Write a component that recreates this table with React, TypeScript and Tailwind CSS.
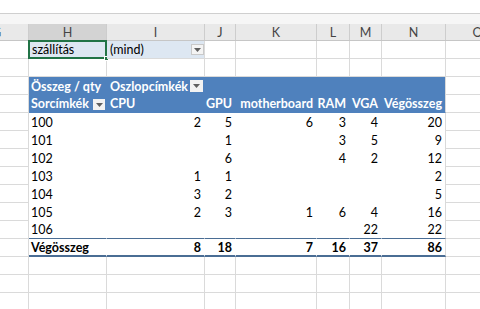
import React from 'react';

type Col = { key: string; w: string };

const cols: Col[] = [
  { key: 'G', w: 'w-[64px]' },
  { key: 'H', w: 'w-[78px]' },
  { key: 'I', w: 'w-[98px]' },
  { key: 'J', w: 'w-[31px]' },
  { key: 'K', w: 'w-[81px]' },
  { key: 'L', w: 'w-[33px]' },
  { key: 'M', w: 'w-[32px]' },
  { key: 'N', w: 'w-[64px]' },
  { key: 'O', w: 'w-[64px]' },
];

// row label, then CPU, GPU, motherboard, RAM, VGA, total
const data: (string | number)[][] = [
  ['100', 2, 5, 6, 3, 4, 20],
  ['101', '', 1, '', 3, 5, 9],
  ['102', '', 6, '', 4, 2, 12],
  ['103', 1, 1, '', '', '', 2],
  ['104', 3, 2, '', '', '', 5],
  ['105', 2, 3, 1, 6, 4, 16],
  ['106', '', '', '', '', 22, 22],
];
const totals = [8, 18, 7, 16, 37, 86];

const grid = 'border-r border-b border-[#dadada]';

function Arrow({ className }: { className: string }) {
  return (
    <span className={`flex items-center justify-center ${className}`}>
      <svg width="7" height="4" viewBox="0 0 7 4">
        <path d="M0 0h7L3.5 4z" fill="#5f5f5f" />
      </svg>
    </span>
  );
}

function Blank({ w }: { w: string }) {
  return <div className={`${w} h-[18px] shrink-0 bg-white ${grid}`} />;
}

function PivotCell({
  w,
  children,
  right,
  last,
  cls = '',
}: {
  w: string;
  children?: React.ReactNode;
  right?: boolean;
  last?: boolean;
  cls?: string;
}) {
  return (
    <div
      className={`${w} h-[18px] shrink-0 flex items-center pt-[2px] px-[2px] border-r ${
        last ? 'border-r-[#dadada]' : 'border-r-transparent'
      } ${right ? 'justify-end pr-[3px]' : ''} ${cls}`}
    >
      {children}
    </div>
  );
}

export default function App() {
  const w = cols.map((c) => c.w);

  return (
    <div className="w-[480px] h-[309px] overflow-hidden bg-white font-['Lato',sans-serif] text-[12.5px] text-black">
      <div className="h-[14px] bg-white border-b border-[#cfcfcf]" />
      <div className="h-[10px] bg-[#f6f6f6]" />

      <div className="ml-[-35px] flex flex-col">
        {/* column letters */}
        <div className="flex h-[17px] bg-[#e9e9e9] border-b border-[#c6c6c6]">
          {cols.map((c) => (
            <div
              key={c.key}
              className={`${c.w} shrink-0 flex items-center justify-center pt-[2px] border-r border-[#cdcdcd] text-[12.5px] text-[#444] ${
                c.key === 'H' ? 'bg-[#d3d3d3]' : ''
              }`}
            >
              {c.key}
            </div>
          ))}
        </div>

        {/* report filter */}
        <div className="flex">
          <Blank w={w[0]} />
          <div className="relative w-[78px] h-[18px] shrink-0 bg-[#dde7f2] border-r border-b border-[#dadada]">
            <div className="absolute inset-[-1px] border-2 border-[#217346] flex items-center pt-[2px] pl-[2px]">
              szállítás
            </div>
            <span className="absolute right-[-3px] bottom-[-3px] w-[5px] h-[5px] bg-[#217346] border border-white" />
          </div>
          <div className="w-[98px] h-[18px] shrink-0 bg-[#dde7f2] border-r border-b border-[#dadada] flex items-center pt-[2px] pl-[3px] relative">
            (mind)
            <Arrow className="absolute right-0 top-[3px] w-[13px] h-[11px] bg-[#f4f4f4] border border-[#c9c9c9]" />
          </div>
          {w.slice(3).map((x, i) => (
            <Blank key={i} w={x} />
          ))}
        </div>

        {/* empty row */}
        <div className="flex">
          {w.map((x, i) => (
            <Blank key={i} w={x} />
          ))}
        </div>

        {/* pivot header */}
        <div className="flex font-bold text-white">
          <Blank w={w[0]} />
          <PivotCell w={w[1]} cls="bg-[#4f81bd] whitespace-nowrap">
            Összeg / qty
          </PivotCell>
          <PivotCell w={w[2]} cls="bg-[#4f81bd] relative pl-[3px]">
            Oszlopcímkék
            <Arrow className="absolute right-[1px] top-[3px] w-[13px] h-[12px] bg-[#f2f2f2]" />
          </PivotCell>
          {w.slice(3, 8).map((x, i) => (
            <PivotCell key={i} w={x} last={i === 4} cls="bg-[#4f81bd]" />
          ))}
          <Blank w={w[8]} />
        </div>
        <div className="flex font-bold text-white">
          <Blank w={w[0]} />
          <PivotCell w={w[1]} cls="bg-[#4f81bd] relative border-b border-b-[#4f81bd]">
            Sorcímkék
            <Arrow className="absolute right-[1px] top-[4px] w-[12px] h-[11px] bg-[#f2f2f2]" />
          </PivotCell>
          <PivotCell w={w[2]} cls="bg-[#4f81bd] pl-[3px] border-b border-b-[#4f81bd]">
            CPU
          </PivotCell>
          {['GPU', 'motherboard', 'RAM', 'VGA', 'Végösszeg'].map((t, i) => (
            <PivotCell
              key={t}
              w={w[i + 3]}
              right
              last={i === 4}
              cls="bg-[#4f81bd] border-b border-b-[#4f81bd] whitespace-nowrap"
            >
              {t}
            </PivotCell>
          ))}
          <Blank w={w[8]} />
        </div>

        {/* values */}
        {data.map((row, r) => (
          <div key={row[0]} className="flex">
            <Blank w={w[0]} />
            {row.map((v, i) => (
              <PivotCell
                key={i}
                w={w[i + 1]}
                right={i > 0}
                last={i === 6}
                cls={`bg-white ${r === data.length - 1 ? 'border-b border-b-[#4a6d94]' : ''}`}
              >
                {v}
              </PivotCell>
            ))}
            <Blank w={w[8]} />
          </div>
        ))}

        {/* grand total */}
        <div className="flex font-bold">
          <Blank w={w[0]} />
          <PivotCell w={w[1]} cls="bg-white border-b-2 border-b-[#4a6d94]">
            Végösszeg
          </PivotCell>
          {totals.map((v, i) => (
            <PivotCell
              key={i}
              w={w[i + 2]}
              right
              last={i === 5}
              cls="bg-white border-b-2 border-b-[#4a6d94]"
            >
              {v}
            </PivotCell>
          ))}
          <Blank w={w[8]} />
        </div>

        {[0, 1, 2].map((r) => (
          <div key={r} className="flex">
            {w.map((x, i) => (
              <Blank key={i} w={x} />
            ))}
          </div>
        ))}
      </div>
    </div>
  );
}
